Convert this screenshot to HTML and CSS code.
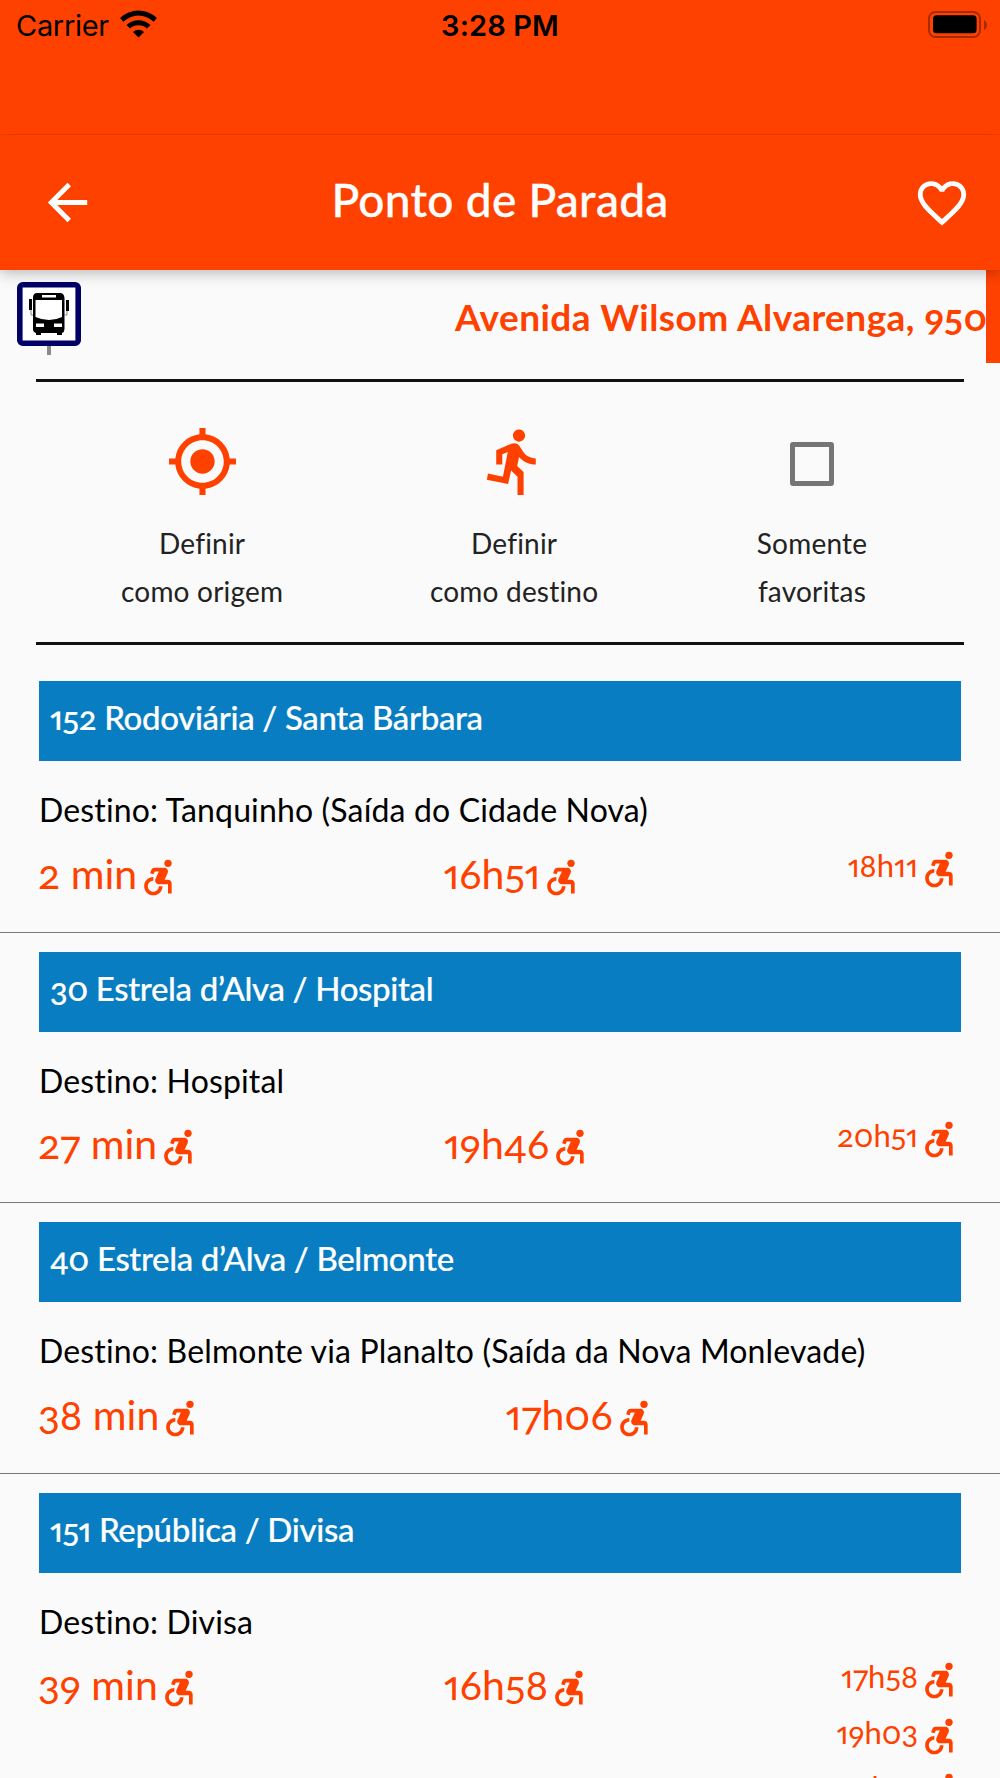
FILE: index.html
```html
<!DOCTYPE html>
<html lang="pt-BR">
<head>
  <meta charset="UTF-8">
  <meta name="viewport" content="width=device-width, initial-scale=1.0">
  <title>Ponto de Parada</title>
  <link rel="stylesheet" href="styles.css">
</head>
<body>

<!-- Shared icons -->
<svg class="sprite" width="0" height="0">
  <symbol id="wheelchair" viewBox="0 0 24 24">
    <circle cx="18" cy="4.54" r="2"/>
    <path d="M15 17h-2c0 1.65-1.35 3-3 3s-3-1.35-3-3 1.35-3 3-3v-2c-2.76 0-5 2.24-5 5s2.24 5 5 5 5-2.24 5-5zm3-3.5h-1.86l1.67-3.67C18.42 8.5 17.44 7 15.96 7h-5.2c-.81 0-1.54.47-1.87 1.2L8.22 10l1.92.53.65-1.53H13l-1.83 4.1c-.6 1.33.39 2.9 1.85 2.9H18v5h2v-5.5c0-1.1-.9-2-2-2z"/>
  </symbol>
</svg>

<div class="status-bar">
  <div class="carrier">
    <span>Carrier</span>
    <svg class="wifi" viewBox="0 0 36 27">
      <path d="M0 7.6a26 26 0 0 1 36 0l-3.3 3.6a21.2 21.2 0 0 0-29.4 0z"/>
      <path d="M6.3 14.4a17 17 0 0 1 23.4 0l-3.5 3.5a12 12 0 0 0-16.4 0z"/>
      <path d="M12.6 21.3a8 8 0 0 1 10.8 0L18 26.6z"/>
    </svg>
  </div>
  <div class="clock">3:28 PM</div>
  <svg class="battery" viewBox="0 0 60 28">
    <rect x="1" y="1" width="51" height="25" rx="6.5" fill="none" stroke="#a62b02" stroke-width="2"/>
    <rect x="5" y="4.3" width="43.6" height="18" rx="3.5"/>
    <path d="M56 9v10c4-2 4-8 0-10z" fill="#a62b02"/>
  </svg>
</div>

<div class="header">
  <svg class="back" viewBox="0 0 24 24"><path d="M20 11H7.83l5.59-5.59L12 4l-8 8 8 8 1.41-1.41L7.83 13H20v-2z"/></svg>
  <h1>Ponto de Parada</h1>
  <svg class="heart" viewBox="0 0 24 24"><path d="M16.5 3c-1.74 0-3.41.81-4.5 2.09C10.91 3.81 9.24 3 7.5 3 4.42 3 2 5.42 2 8.5c0 3.78 3.4 6.86 8.55 11.54L12 21.35l1.45-1.32C18.6 15.36 22 12.28 22 8.5 22 5.42 19.58 3 16.5 3zm-4.4 15.55l-.1.1-.1-.1C7.14 14.24 4 11.39 4 8.5 4 6.5 5.5 5 7.5 5c1.54 0 3.04.99 3.57 2.36h1.87C13.46 5.99 14.96 5 16.5 5c2 0 3.5 1.5 3.5 3.5 0 2.89-3.14 5.74-7.9 10.05z"/></svg>
</div>

<div class="stop">
  <svg class="stop-sign" viewBox="0 0 64 73">
    <rect x="30" y="62" width="4" height="11" fill="#8a8a8a"/>
    <rect x="2.8" y="2.8" width="58.4" height="58.4" rx="3" fill="#fff" stroke="#000066" stroke-width="5.6"/>
    <path d="M20 11h23q4 0 4.500 5v31q0 3-2.500 4v2h-5v-2H24v2h-5v-2q-3-1-3-4V16q0-5 4-5z"/>
    <path d="M12 17h3v11h-3zM49 18h3v11h-3z"/>
    <path d="M14 28v5h2M50 29v4h-2" fill="none" stroke="#888"/>
    <path d="M18.500 18h26.500v17q-6 3-13 3t-13.500-3zM25 13h14v2.500H25zM19 41.500h8v3.500h-8zM37 41.500h8v3.500h-8z" fill="#fff"/>
  </svg>
  <div class="address">Avenida Wilsom Alvarenga, 950</div>
  <div class="edge"></div>
</div>

<div class="actions">
  <div class="action">
    <svg class="action-icon" viewBox="0 0 24 24"><path d="M12 8c-2.21 0-4 1.790-4 4s1.790 4 4 4 4-1.790 4-4-1.790-4-4-4zm8.940 3A8.994 8.994 0 0 0 13 3.060V1h-2v2.060A8.994 8.994 0 0 0 3.060 11H1v2h2.060A8.994 8.994 0 0 0 11 20.940V23h2v-2.060A8.994 8.994 0 0 0 20.940 13H23v-2h-2.060zM12 19c-3.870 0-7-3.130-7-7s3.130-7 7-7 7 3.130 7 7-3.130 7-7 7z"/></svg>
    <p>Definir<br>como origem</p>
  </div>
  <div class="action">
    <svg class="action-icon" viewBox="0 0 24 24"><path d="M13.490 5.480c1.100 0 2-.9 2-2s-.9-2-2-2-2 .9-2 2 .9 2 2 2zm-3.600 13.900l1-4.400 2.100 2v6h2v-7.500l-2.100-2 .6-3c1.300 1.500 3.300 2.500 5.500 2.500v-2c-1.900 0-3.500-1-4.300-2.400l-1-1.600c-.4-.6-1-1-1.700-1-.3 0-.5.1-.8.1l-5.200 2.200v4.700h2v-3.400l1.800-.7-1.600 8.100-4.900-1-.4 2 7 1.400z"/></svg>
    <p>Definir<br>como destino</p>
  </div>
  <div class="action filter">
    <div class="check-wrap"><div class="checkbox"></div></div>
    <p>Somente<br>favoritas</p>
  </div>
</div>

<div class="lines">
  <div class="line">
    <h2>152 Rodoviária / Santa Bárbara</h2>
    <p class="dest">Destino: Tanquinho (Saída do Cidade Nova)</p>
    <div class="times">
      <div class="time"><span>2 min</span><svg><use href="#wheelchair"/></svg></div>
      <div class="time"><span>16h51</span><svg><use href="#wheelchair"/></svg></div>
      <div class="later">
        <div><span>18h11</span><svg><use href="#wheelchair"/></svg></div>
      </div>
    </div>
  </div>

  <div class="line">
    <h2>30 Estrela d’Alva / Hospital</h2>
    <p class="dest">Destino: Hospital</p>
    <div class="times">
      <div class="time"><span>27 min</span><svg><use href="#wheelchair"/></svg></div>
      <div class="time"><span>19h46</span><svg><use href="#wheelchair"/></svg></div>
      <div class="later">
        <div><span>20h51</span><svg><use href="#wheelchair"/></svg></div>
      </div>
    </div>
  </div>

  <div class="line">
    <h2>40 Estrela d’Alva / Belmonte</h2>
    <p class="dest">Destino: Belmonte via Planalto (Saída da Nova Monlevade)</p>
    <div class="times">
      <div class="time"><span>38 min</span><svg><use href="#wheelchair"/></svg></div>
      <div class="time"><span>17h06</span><svg><use href="#wheelchair"/></svg></div>
      <div class="later"></div>
    </div>
  </div>

  <div class="line">
    <h2>151 República / Divisa</h2>
    <p class="dest">Destino: Divisa</p>
    <div class="times">
      <div class="time"><span>39 min</span><svg><use href="#wheelchair"/></svg></div>
      <div class="time"><span>16h58</span><svg><use href="#wheelchair"/></svg></div>
      <div class="later">
        <div><span>17h58</span><svg><use href="#wheelchair"/></svg></div>
        <div><span>19h03</span><svg><use href="#wheelchair"/></svg></div>
        <div><span>20h18</span><svg><use href="#wheelchair"/></svg></div>
      </div>
    </div>
  </div>
</div>

</body>
</html>
```

FILE: styles.css
```css
* {
  box-sizing: border-box;
}
body {
  margin: 0;
  height: 1778px;
  overflow: hidden;
  background-color: #fafafa;
  font-family: Lato, "Open Sans", sans-serif;
  font-variant-ligatures: none;
  font-variant-numeric: oldstyle-nums proportional-nums;
  color: #000;
}
h1, h2, p {
  margin: 0;
}
svg {
  display: block;
  flex-shrink: 0;
}
.sprite {
  position: absolute;
}

/* Status bar */
.status-bar {
  display: grid;
  grid-template-columns: 1fr auto 1fr;
  align-items: start;
  height: 135px;
  padding: 0 12px 0 16px;
  background-color: #ff4100;
  font-family: Inter, sans-serif;
  font-variant-numeric: normal;
  font-size: 29px;
  line-height: 52px;
}
.carrier {
  display: flex;
  gap: 11px;
}
.carrier span {
  letter-spacing: -0.3px;
}
.wifi {
  width: 37px;
  height: 28px;
  margin-top: 10px;
}
.clock {
  font-weight: 600;
  letter-spacing: 0.1px;
  margin-left: -4px;
}
.battery {
  width: 60px;
  height: 28px;
  margin-top: 11px;
  justify-self: end;
}

/* Header */
.header {
  position: relative;
  z-index: 1;
  display: grid;
  grid-template-columns: 1fr auto 1fr;
  align-items: center;
  height: 135px;
  padding: 0 29px 0 38px;
  background-color: #ff4100;
  box-shadow: 0 2px 14px rgba(0, 0, 0, 0.3);
  clip-path: inset(-1px 0 -30px 0);
}
.header svg {
  fill: #fff;
}
.header h1 {
  color: #fff;
  font-size: 46px;
  font-weight: 500;
  line-height: 60px;
  letter-spacing: 0.3px;
  margin: 0 0 5px -9px;
  -webkit-text-stroke: 0.3px #fff;
}
.back {
  width: 59px;
  height: 59px;
}
.heart {
  width: 58px;
  height: 58px;
  justify-self: end;
}

/* Bus stop */
.stop {
  display: flex;
  height: 109px;
  padding-left: 17px;
}
.stop-sign {
  width: 64px;
  height: 73px;
  margin-top: 12px;
}
.address {
  flex: 1;
  margin-right: -2px;
  text-align: right;
  color: #ff4100;
  font-size: 37px;
  font-weight: 700;
  line-height: 93px;
  letter-spacing: 0.45px;
  white-space: nowrap;
}
.edge {
  width: 14.5px;
  height: 93px;
  background-color: #ff4100;
}

/* Actions */
.actions {
  display: flex;
  justify-content: space-between;
  height: 266px;
  margin: 0 36px;
  padding: 43px 85px 0;
  border-top: 3px solid #111;
  border-bottom: 3px solid #111;
}
.action {
  display: flex;
  flex-direction: column;
  align-items: center;
}
.filter {
  width: 134px;
}
.action-icon {
  width: 73px;
  height: 73px;
  fill: #ff4100;
}
.check-wrap {
  height: 73px;
  padding-top: 17px;
}
.checkbox {
  width: 44px;
  height: 44px;
  border: 5px solid #757575;
  border-radius: 3px;
}
.action p {
  margin-top: 21px;
  color: #222;
  font-size: 28px;
  line-height: 48.4px;
  letter-spacing: 0.2px;
  text-align: center;
}

/* Lines */
.lines {
  padding-top: 17px;
}
.line {
  min-height: 270.6px;
  padding: 19px 39px 0;
  border-bottom: 1px solid #777;
}
.line h2 {
  height: 80px;
  padding-left: 11px;
  background-color: #087dc1;
  color: #fff;
  font-size: 33px;
  font-weight: 500;
  line-height: 73px;
  letter-spacing: -0.35px;
  -webkit-text-stroke: 0.2px #fff;
}
.dest {
  margin-top: 24px;
  font-size: 32px;
  line-height: 50px;
  letter-spacing: 0.15px;
  white-space: nowrap;
}
.times {
  display: flex;
  justify-content: space-between;
  color: #ff4100;
}
.times svg {
  width: 44px;
  height: 44px;
  margin-left: -2px;
  fill: #ff4100;
}
.time {
  display: flex;
  align-items: center;
  height: 55px;
  margin: 14px 0 0 -1px;
  font-size: 41px;
}
.time span {
  padding-bottom: 7px;
}
.later div {
  display: flex;
  align-items: center;
  justify-content: flex-end;
  height: 55.4px;
  font-size: 31px;
}
.later {
  padding: 6px 1px 0 0;
}
.later span {
  padding-bottom: 8px;
}
```
